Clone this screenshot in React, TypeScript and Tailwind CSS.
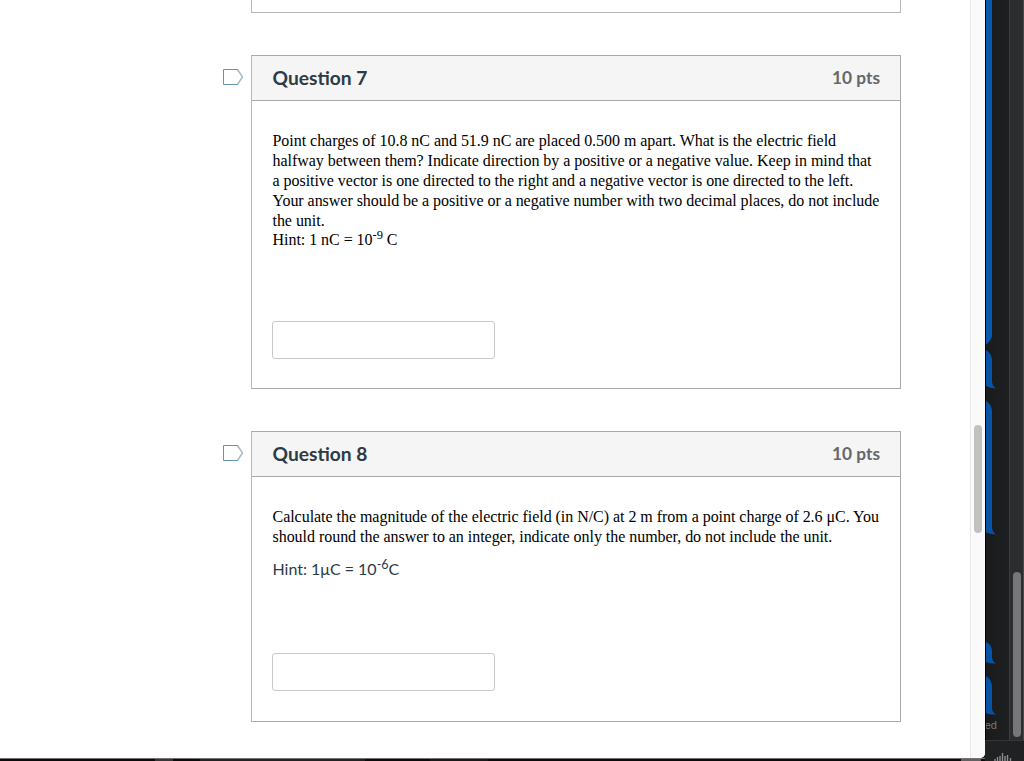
import React from "react";

const serif =
  "font-['Liberation_Serif',serif] text-[16px] leading-[20px] tracking-[-0.037px] text-black";

function Flag() {
  return (
    <svg className="mt-[13px] mr-[7px] h-[18px] w-[22px] shrink-0" viewBox="0 0 22 18" fill="none" strokeWidth="1">
      <path d="M16 1.5H1.5V16.5H16" stroke="#6594b0" />
      <path d="M15.5 1.5L20.5 9L15.5 16.5" stroke="#a3b8c8" strokeWidth="1.4" />
    </svg>
  );
}

function Question({
  title,
  className,
  children,
}: {
  title: string;
  className: string;
  children: React.ReactNode;
}) {
  return (
    <section className={`flex items-start pl-[222px] ${className}`}>
      <Flag />
      <div className="flex h-full w-[650px] flex-col border border-[#aaaaaa] border-l-[#b8b8b8] bg-white">
        <header className="flex h-[45px] shrink-0 items-center justify-between border-b border-[#aaaaaa] bg-[#f5f5f5] px-5 font-['Lato',sans-serif] font-bold">
          <h2 className="pl-[0.5px] text-[19.2px] text-[#2d3b45]">{title}</h2>
          <span className="text-[17.3px] text-[#666666]">10 pts</span>
        </header>
        <div className="flex flex-1 flex-col items-start px-5 pt-[30px] pb-[30px]">
          <div className="pl-[0.5px]">{children}</div>
          <input className="mt-auto h-[38px] w-[223px] rounded-[3px] border border-[#c7c9cb] outline-none" />
        </div>
      </div>
    </section>
  );
}

function Lines({ lines }: { lines: string[] }) {
  return (
    <>
      {lines.map((line) => (
        <p key={line} className={`${serif} whitespace-nowrap`}>{line}</p>
      ))}
    </>
  );
}

export default function App() {
  return (
    <div className="flex h-[761px] w-[1024px] overflow-hidden bg-[#1b1c1e]">
      <div className="flex w-[985px] shrink-0 flex-col">
        <div className="flex h-[758px] overflow-hidden rounded-br-[5px] bg-white">
          <main className="w-[970px] shrink-0">
            <div className="pl-[251px]">
              <div className="h-[13px] w-[650px] border border-t-0 border-[#b8b8b8]" />
            </div>
            <Question title="Question 7" className="mt-[42px] h-[334px] [&_input]:mb-[-1px]">
              <Lines
                lines={[
                  "Point charges of 10.8 nC and 51.9 nC are placed 0.500 m apart. What is the electric field",
                  "halfway between them? Indicate direction by a positive or a negative value. Keep in mind that",
                  "a positive vector is one directed to the right and a negative vector is one directed to the left.",
                  "Your answer should be a positive or a negative number with two decimal places, do not include",
                  "the unit.",
                ]}
              />
              <p className={`${serif} -mt-px`}>
                Hint: 1 nC = 10<sup className="text-[12.5px] leading-none">-9</sup> C
              </p>
            </Question>
            <Question title="Question 8" className="mt-[42px] h-[291px]">
              <Lines
                lines={[
                  "Calculate the magnitude of the electric field (in N/C) at 2 m from a point charge of 2.6 μC. You",
                  "should round the answer to an integer, indicate only the number, do not include the unit.",
                ]}
              />
              <p className="mt-[10px] font-['Lato',sans-serif] text-[16px] leading-[24px] text-[#2d3b45]">
                Hint: 1μC = 10<sup className="text-[12.5px] leading-none">-6</sup>C
              </p>
            </Question>
          </main>
          <div className="flex w-[15px] justify-center border-l border-[#e8e8e8] bg-[#fafafa] pt-[425px]">
            <div className="h-[108px] w-[8px] rounded-full bg-[#c1c1c1]" />
          </div>
        </div>
        <div className="flex h-[3px] items-end border-t border-[#737373] bg-[#0d0a0b] pl-[155px]">
          <div className="h-[2px] w-[18px] bg-[#393637]" />
          <div className="ml-[27px] h-[2px] w-[165px] bg-[#252122]" />
          <div className="ml-[65px] h-[2px] w-[58px] bg-[#1b1819]" />
          <div className="ml-[473px] h-[2px] w-[20px] bg-[#626061]" />
        </div>
      </div>
      <aside className="flex w-[39px] flex-col">
        <div className="flex h-[740px]">
          <div className="relative w-[24px] overflow-hidden border-l border-black bg-linear-to-r from-[#191b1c] to-[#1d1f20]">
            <svg className="h-[740px] w-[23px]" viewBox="986 0 23 740" fill="#0753a5">
              <path d="M986 0H992V336Q991 341 986 344.500Z" fill="#075aad" />
              <path d="M986 350Q991 353 992 359V381Q992 386 996 388.500Q990 388 986 386Z" />
              <path d="M986 401Q991 404 992 410V527Q992 532 996 534.500Q990 534 986 532.500Z" />
              <path d="M986 642Q991 644 992 650V657Q992 661 996 663.500Q990 664 986 662Z" />
              <path d="M986 676Q991 679 992 685V708Q992 712 996 714.500Q990 715 986 713Z" />
            </svg>
            <span className="absolute top-[718px] right-[12px] font-['Liberation_Sans',sans-serif] text-[11px] leading-[14px] text-[#77797a]">ed</span>
          </div>
          <div className="flex w-[15px] justify-center border-x border-l-[#3c3d3f] border-r-[#484848] bg-[#2c2d2f] pt-[572px]">
            <div className="h-[165px] w-[8px] rounded-full bg-[#767778]" />
          </div>
        </div>
        <div className="flex h-[21px] items-end border-t border-[#343536] bg-[#202122] pl-[9px]">
          <svg className="h-[8px] w-[18px]" viewBox="0 0 18 8" stroke="#8b8c8d" strokeWidth="1.4">
            <path d="M1 6V8M3.500 4V8M6 3V8M8.500 0V8M11 3V8M13.500 2V8M16.500 5V8" />
          </svg>
        </div>
      </aside>
    </div>
  );
}
